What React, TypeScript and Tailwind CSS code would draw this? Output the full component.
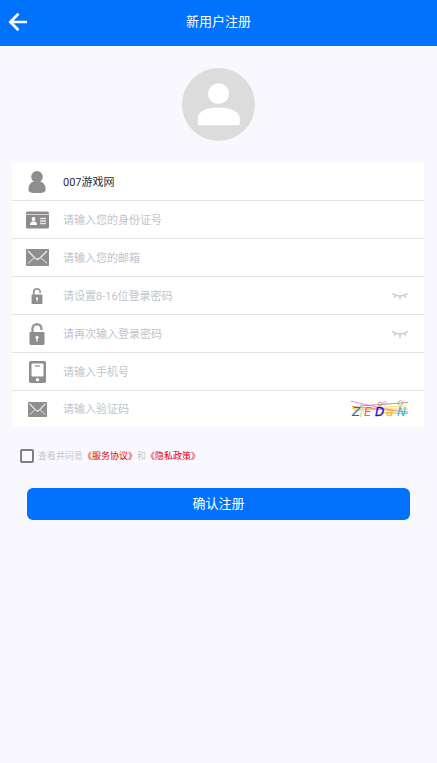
import { useState, type ReactNode } from "react";

type Field = {
  id: string;
  label: string;
  placeholder: string;
  type: string;
  icon: ReactNode;
  value?: string;
  trailing?: ReactNode;
};

function UserIcon() {
  return (
    <svg width="18" height="22" viewBox="0 0 18 22" fill="#8e8e8e">
      <circle cx="9" cy="5.800" r="5.800" />
      <path d="M5 10.800h8c2.900 1.200 4.500 3.600 4.500 7v1.600c0 1.600-3.400 2.600-8.500 2.600S.5 21 .5 19.400v-1.600c0-3.400 1.600-5.800 4.500-7z" />
    </svg>
  );
}

function IdCardIcon() {
  return (
    <svg width="23" height="18" viewBox="0 0 23 18">
      <rect y="0.500" width="23" height="17" rx="1.500" fill="#8f8b8b" />
      <path d="M0 3.500h23" stroke="#d5d2d2" strokeWidth="1" />
      <circle cx="7.500" cy="8" r="1.900" fill="#fff" />
      <path d="M4 14c0-2.400 1.200-3.800 3.500-3.800S11 11.600 11 14z" fill="#fff" />
      <path d="M14 7.500h6M14 10h6M14 12.500h6" stroke="#e6e4e4" strokeWidth="1.300" />
    </svg>
  );
}

function MailIcon({ className }: { className: string }) {
  return (
    <svg className={className} viewBox="0 0 23 17" preserveAspectRatio="none" fill="none">
      <rect width="23" height="17" rx="0.800" fill="#8e8e8e" />
      <path d="M2 2l6.500 6.500 3 2 3-2L21 2" stroke="#e6e6e6" strokeWidth="1.500" />
      <path d="M2 14.500l6.500-6M21 14.500l-6.500-6" stroke="#c8c8c8" strokeWidth="1.200" />
    </svg>
  );
}

function LockIcon({ className }: { className: string }) {
  return (
    <svg className={className} viewBox="0 0 16 22" fill="none">
      <path d="M3.500 10V5.800C3.500 3.200 5.300 1.300 8 1.300s4.400 1.700 4.400 4.200V7" stroke="#979797" strokeWidth="2.400" />
      <rect x="0.500" y="9" width="15" height="13" rx="1.300" fill="#8e8e8e" />
      <circle cx="8" cy="14.300" r="1.500" fill="#fff" />
      <path d="M8 14.500v4" stroke="#fff" strokeWidth="1.300" />
    </svg>
  );
}

function PhoneIcon() {
  return (
    <svg width="17" height="22" viewBox="0 0 17 22">
      <rect width="17" height="22" rx="1.800" fill="#8e8e8e" />
      <rect x="2.500" y="2.500" width="12" height="13" rx="0.800" fill="#fff" />
      <path d="M6 5h5" stroke="#8e8e8e" strokeWidth="1.200" />
      <circle cx="8.500" cy="18.700" r="1.700" fill="#fff" />
    </svg>
  );
}

function ClosedEye() {
  return (
    <button type="button" aria-label="显示密码" className="shrink-0">
      <svg width="16" height="8" viewBox="0 0 16 8" fill="none" stroke="#cacaca" strokeWidth="1.500" strokeLinecap="round">
        <path d="M.8 1.500c1.900 1.700 4.300 2.500 7.200 2.500s5.300-.8 7.200-2.500M3.600 3.300L2.500 5.200M8 4.300v2.900M12.400 3.300l1.100 1.900" />
      </svg>
    </button>
  );
}

function Captcha() {
  return (
    <button type="button" aria-label="刷新验证码" className="shrink-0">
      <svg
        width="58"
        height="20"
        viewBox="0 0 58 20"
        fill="none"
        className="font-['DejaVu_Sans',sans-serif] text-[12px] italic"
      >
        <g strokeWidth="0.800">
          <path d="M1 2.300l24 5.200" stroke="#f070d0" />
          <path d="M24 7.500l20 4" stroke="#ff70c0" />
          <path d="M2 7.500l56 5.500" stroke="#d07040" />
          <path d="M10 7l48-3.500" stroke="#a08878" />
          <path d="M2 9.500l26-1 29-1.500" stroke="#e8e040" />
          <path d="M28 10h30" stroke="#f0d040" />
          <path d="M30 13.500l28 1" stroke="#f09030" />
          <path d="M4 11l26-.5" stroke="#f0a060" />
          <circle cx="30" cy="5" r="1.900" stroke="#b08090" />
          <circle cx="34.500" cy="4.300" r="1.600" stroke="#c880d8" />
          <circle cx="50.500" cy="4" r="2.300" stroke="#b09888" />
          <circle cx="12" cy="7" r="1.800" stroke="#b8c8f0" />
          <path d="M10.500 18l.8-4.500c.8-1.200 2-1.200 2.400 0" stroke="#70d890" />
        </g>
        <text x="2" y="17" fill="#1070c0">Z</text>
        <text x="14" y="17" fill="#ff6038">E</text>
        <text x="25" y="17" fill="#1010e0" stroke="#1010e0" strokeWidth="0.300">D</text>
        <text x="36" y="17" fill="#f8c020" stroke="#f8c020" strokeWidth="0.300">a</text>
        <text x="47" y="17" fill="#38b8f0">N</text>
      </svg>
    </button>
  );
}

const fields: Field[] = [
  { id: "name", label: "姓名", placeholder: "请输入您的姓名", type: "text", value: "007游戏网", icon: <UserIcon /> },
  { id: "idcard", label: "身份证号", placeholder: "请输入您的身份证号", type: "text", icon: <IdCardIcon /> },
  { id: "email", label: "邮箱", placeholder: "请输入您的邮箱", type: "email", icon: <MailIcon className="h-[17px] w-[23px]" /> },
  {
    id: "password",
    label: "登录密码",
    placeholder: "请设置8-16位登录密码",
    type: "password",
    icon: <LockIcon className="h-4 w-3" />,
    trailing: <ClosedEye />,
  },
  {
    id: "confirm",
    label: "确认密码",
    placeholder: "请再次输入登录密码",
    type: "password",
    icon: <LockIcon className="h-[22px] w-4" />,
    trailing: <ClosedEye />,
  },
  { id: "phone", label: "手机号", placeholder: "请输入手机号", type: "tel", icon: <PhoneIcon /> },
  {
    id: "code",
    label: "验证码",
    placeholder: "请输入验证码",
    type: "text",
    icon: <MailIcon className="h-[15px] w-[19px]" />,
    trailing: <Captcha />,
  },
];

function FieldRow({ field }: { field: Field }) {
  return (
    <div className="flex h-[38px] items-center gap-3 pr-4 pl-[11px] last:h-9">
      <label htmlFor={field.id} aria-label={field.label} className="flex w-7 shrink-0 justify-center">
        {field.icon}
      </label>
      <input
        id={field.id}
        type={field.type}
        defaultValue={field.value}
        placeholder={field.placeholder}
        className="min-w-0 flex-1 bg-transparent pt-[3px] text-[11px] text-[#1f2d3d] outline-none placeholder:text-[#c0c4cc]"
      />
      {field.trailing}
    </div>
  );
}

export default function App() {
  const [agreed, setAgreed] = useState(false);

  return (
    <div className="min-h-screen bg-[#f8f8fe] font-[Roboto,'Noto_Sans_CJK_SC',sans-serif]">
      <header className="grid h-[46px] grid-cols-[1fr_auto_1fr] items-center bg-[#0072fc] px-2 pb-0.5 text-white">
        <button type="button" aria-label="返回" className="justify-self-start">
          <svg width="20" height="20" viewBox="0 0 20 20" fill="none" stroke="currentColor" strokeWidth="2.700">
            <path d="M19 10H3M10.500 1.700L2.300 10l8.200 8.300" />
          </svg>
        </button>
        <h1 className="text-[13px]">新用户注册</h1>
      </header>

      <form onSubmit={(e) => e.preventDefault()}>
        <div className="flex justify-center py-[22px]">
          <svg width="73" height="73" viewBox="0 0 74 74" fill="#fff">
            <circle cx="37" cy="37" r="37" fill="#dcdcdc" />
            <circle cx="37" cy="26" r="10.600" />
            <path d="M16 50.500C16 44 26 40 37 40s21.500 4 21.500 10.500v6a1.500 1.500 0 0 1-1.500 1.500H17.500a1.500 1.500 0 0 1-1.500-1.500z" />
          </svg>
        </div>

        <div className="mr-[13px] ml-3 divide-y divide-[#e4e4e6] bg-white">
          {fields.map((field) => (
            <FieldRow key={field.id} field={field} />
          ))}
        </div>

        <div className="mt-[21px] flex items-center gap-1 px-5 text-[9px] text-[#c8c9cc]">
          <input
            id="agree"
            type="checkbox"
            checked={agreed}
            onChange={(e) => setAgreed(e.target.checked)}
            className="size-[14px] appearance-none rounded-[2px] border-2 border-[#808084] checked:bg-[#0072fc]"
          />
          <p className="pt-0.5">
            <label htmlFor="agree">查看并同意</label>
            <a href="#service" className="text-[#e60012]">《服务协议》</a>
            和
            <a href="#privacy" className="text-[#e60012]">《隐私政策》</a>
          </p>
        </div>

        <div className="mt-6 px-[27px]">
          <button type="submit" className="h-8 w-full rounded-md bg-[#0072fc] text-[13px] text-white">
            确认注册
          </button>
        </div>
      </form>
    </div>
  );
}
